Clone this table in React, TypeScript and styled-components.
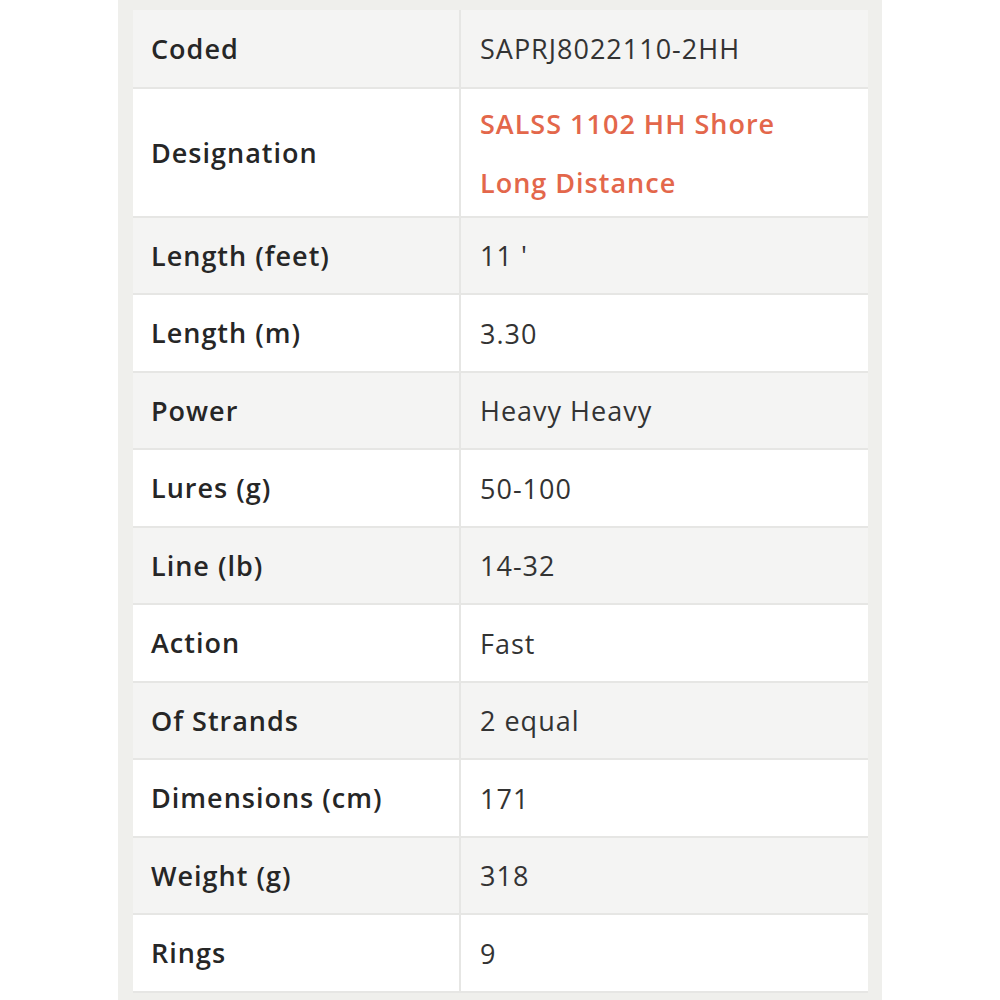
import React from "react";
import styled, { createGlobalStyle } from "styled-components";

const GlobalStyle = createGlobalStyle`
  html, body {
    margin: 0;
    padding: 0;
    background: #ffffff;
  }
  body {
    font-family: "Open Sans", "Liberation Sans", sans-serif;
  }
`;

type Spec = {
  label: string;
  value: string[];
  accent?: boolean;
};

const SPECS: Spec[] = [
  { label: "Coded", value: ["SAPRJ8022110-2HH"] },
  {
    label: "Designation",
    value: ["SALSS 1102 HH Shore", "Long Distance"],
    accent: true,
  },
  { label: "Length (feet)", value: ["11 '"] },
  { label: "Length (m)", value: ["3.30"] },
  { label: "Power", value: ["Heavy Heavy"] },
  { label: "Lures (g)", value: ["50-100"] },
  { label: "Line (lb)", value: ["14-32"] },
  { label: "Action", value: ["Fast"] },
  { label: "Of Strands", value: ["2 equal"] },
  { label: "Dimensions (cm)", value: ["171"] },
  { label: "Weight (g)", value: ["318"] },
  { label: "Rings", value: ["9"] },
];

const App: React.FC = () => {
  return (
    <>
      <GlobalStyle />
      <Page>
        <Panel>
          <SpecTable>
            <tbody>
              {SPECS.map((spec, i) => (
                <Row key={spec.label} $shaded={i % 2 === 0}>
                  <LabelCell>{spec.label}</LabelCell>
                  <ValueCell $accent={spec.accent} $multi={spec.value.length > 1}>
                    {spec.value.map((line) => (
                      <Line key={line}>{line}</Line>
                    ))}
                  </ValueCell>
                </Row>
              ))}
            </tbody>
          </SpecTable>
        </Panel>
      </Page>
    </>
  );
};

export default App;

const Page = styled.div`
  width: 1000px;
  height: 1000px;
  display: flex;
  justify-content: center;
  overflow: hidden;
`;

const Panel = styled.div`
  width: 764px;
  height: 1000px;
  box-sizing: border-box;
  background: #efefec;
  padding: 10px 14px 0 15px;
`;

const SpecTable = styled.table`
  width: 735px;
  border-collapse: collapse;
  table-layout: fixed;
  font-size: 27px;
  letter-spacing: 1px;
  color: #2a2a2a;
`;

const Row = styled.tr<{ $shaded: boolean }>`
  background: ${(p) => (p.$shaded ? "#f4f4f3" : "#ffffff")};
  border-bottom: 2px solid #e6e6e4;
`;

const LabelCell = styled.td`
  width: 327px;
  height: 77.5px;
  box-sizing: border-box;
  padding: 0 18px;
  font-weight: 600;
  vertical-align: middle;
  border-right: 2px solid #e6e6e4;
  color: #262626;
`;

const ValueCell = styled.td<{ $accent?: boolean; $multi?: boolean }>`
  padding: ${(p) => (p.$multi ? "5px 19px 4px" : "1px 19px 0")};
  vertical-align: middle;
  color: ${(p) => (p.$accent ? "#e3674b" : "#333333")};
  font-weight: ${(p) => (p.$accent ? 600 : 400)};
`;

const Line = styled.div`
  line-height: 59px;
`;
